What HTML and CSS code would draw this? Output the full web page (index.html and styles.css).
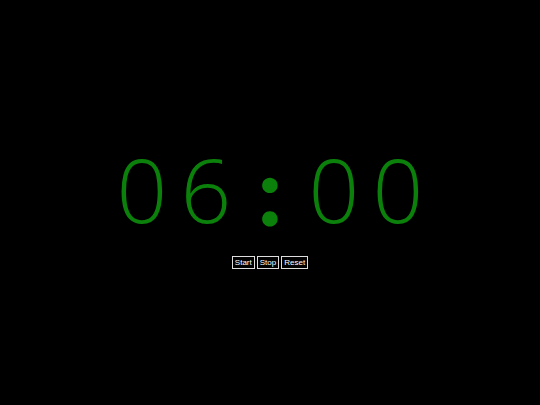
FILE: index.html
```html
<!DOCTYPE html>
<html>
<head>
<meta charset="utf-8">
<link rel="stylesheet" href="styles.css">
</head>
<body>
<main class="page">
  <div class="clock">
    <span class="ch">0</span><span class="ch">6</span><span class="ch colon">:</span><span class="ch">0</span><span class="ch">0</span>
  </div>
  <div class="controls">
    <button class="btn">Start</button>
    <button class="btn">Stop</button>
    <button class="btn">Reset</button>
  </div>
</main>
</body>
</html>
```
FILE: styles.css
```css
html, body {
  margin: 0;
  padding: 0;
  background: #000;
}
.page {
  width: 540px;
  height: 405px;
  display: flex;
  flex-direction: column;
  align-items: center;
  justify-content: center;
}
.clock {
  display: flex;
  color: #0b800b;
  font-family: "Open Sans", sans-serif;
  font-weight: 300;
  font-size: 89px;
  line-height: 100px;
  margin-top: 2px;
}
.ch {
  width: 64px;
  text-align: center;
}
.colon {
  font-family: "Lato", sans-serif;
  font-weight: 900;
  font-size: 95px;
}
.controls {
  display: flex;
  gap: 2px;
  margin-top: 17px;
}
.btn {
  background: #000;
  color: #fff;
  border: 1px solid #ddd;
  font-family: "Liberation Sans", Arial, sans-serif;
  font-size: 8px;
  height: 13px;
  padding: 0 2px;
  margin: 0;
  line-height: 11px;
}
```
